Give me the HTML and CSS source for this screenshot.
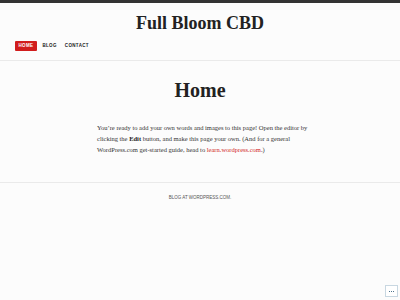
FILE: index.html
```html
<!DOCTYPE html>
<html>
<head>
<meta charset="utf-8">
<link rel="stylesheet" href="styles.css">
</head>
<body>
<header class="site-header">
  <h1 class="site-title">Full Bloom CBD</h1>
  <nav class="nav">
    <a class="nav-item active">HOME</a>
    <a class="nav-item">BLOG</a>
    <a class="nav-item">CONTACT</a>
  </nav>
</header>
<main class="content">
  <h2 class="page-title">Home</h2>
  <p class="text">You’re ready to add your own words and images to this page! Open the editor by clicking the <b>Edit</b> button, and make this page your own. (And for a general WordPress.com get-started guide, head to <a class="link">learn.wordpress.com</a>.)</p>
</main>
<footer class="footer">BLOG AT WORDPRESS.COM.</footer>
<div class="actions"><span class="dot"></span><span class="dot"></span><span class="dot"></span></div>
</body>
</html>
```
FILE: styles.css
```css
html, body { margin: 0; padding: 0; }
body {
  background: #fcfcfc;
  border-top: 3px solid #333;
  height: 297px;
  overflow: hidden;
  font-family: "Liberation Serif", serif;
  color: #333;
}
.site-header {
  border-bottom: 1px solid #eaeaea;
  padding: 9px 0 9px;
}
.site-title {
  margin: 0;
  text-align: center;
  font-size: 18px;
  line-height: 22px;
  font-weight: bold;
  color: #222;
}
.nav {
  display: flex;
  padding: 7px 0 0 15px;
  font-family: "Liberation Sans", sans-serif;
}
.nav-item {
  font-size: 4.5px;
  font-weight: bold;
  letter-spacing: 0.35px;
  line-height: 10px;
  padding: 0 3.5px;
  margin-right: 1px;
  color: #222;
  border-radius: 1px;
}
.nav-item.active {
  background: #d11d1d;
  color: #fff;
  margin-right: 2px;
}
.content {
  border-bottom: 1px solid #eaeaea;
  padding: 17px 0 27px;
}
.page-title {
  margin: 0;
  text-align: center;
  font-size: 20px;
  line-height: 24px;
  font-weight: bold;
  color: #222;
}
.text {
  width: 212px;
  margin: 20px 0 0 97px;
  font-size: 6.5px;
  line-height: 11px;
  color: #333;
}
.text b { color: #222; }
.link { color: #d11d1d; }
.footer {
  text-align: center;
  font-family: "Liberation Sans", sans-serif;
  font-size: 4.5px;
  color: #555;
  padding-top: 12px;
}
.actions {
  position: fixed;
  right: 2px;
  bottom: 3px;
  width: 11px;
  height: 10px;
  border: 1px solid #c8d7e1;
  background: #fff;
  display: flex;
  align-items: center;
  justify-content: center;
  gap: 1px;
}
.dot { width: 1px; height: 1px; background: #4f748e; }
```
